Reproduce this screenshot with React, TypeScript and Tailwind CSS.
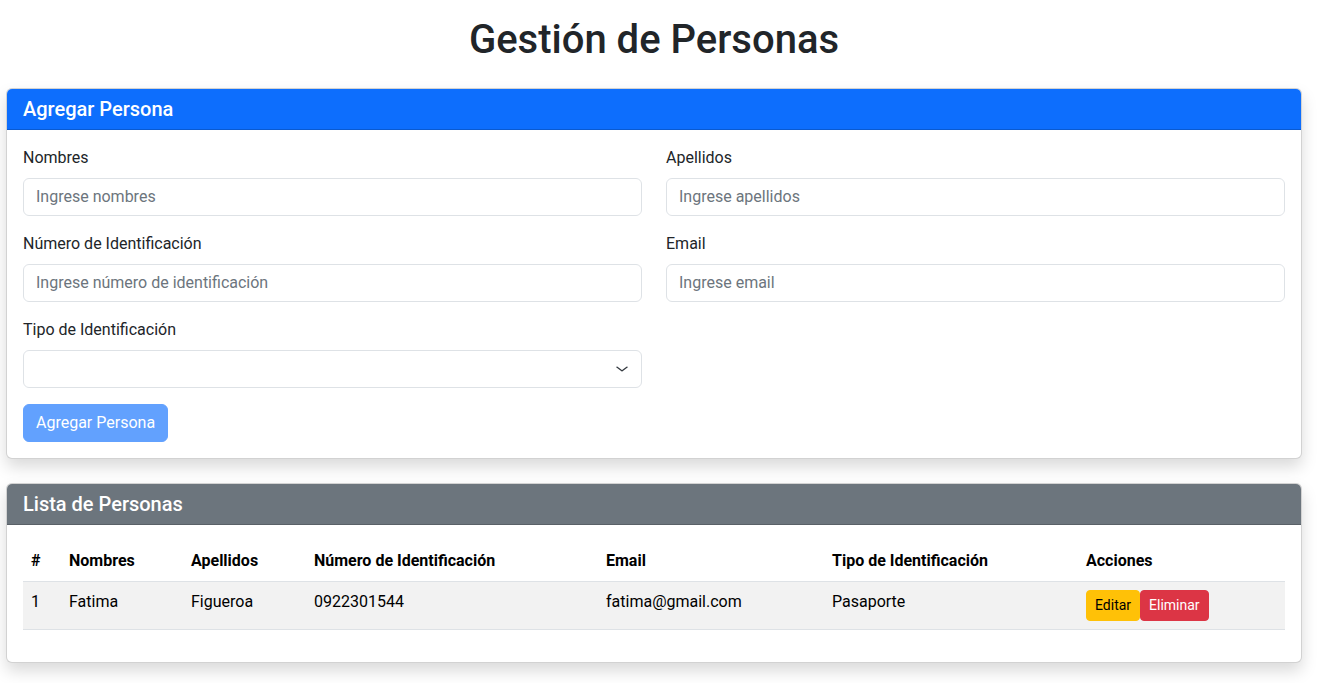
import React, { useState } from 'react';

type Persona = {
  id: number;
  nombres: string;
  apellidos: string;
  numeroIdentificacion: string;
  email: string;
  tipoIdentificacion: string;
};

const personas: Persona[] = [
  {
    id: 1,
    nombres: 'Fatima',
    apellidos: 'Figueroa',
    numeroIdentificacion: '0922301544',
    email: 'fatima@gmail.com',
    tipoIdentificacion: 'Pasaporte',
  },
];

const Field: React.FC<{ label: string; placeholder: string }> = ({ label, placeholder }) => (
  <div>
    <label className="block mb-2 text-base leading-6 text-[#212529]">{label}</label>
    <input
      type="text"
      placeholder={placeholder}
      className="block w-full h-[38px] px-3 pb-px text-base leading-6 text-[#212529] bg-white border border-[#dee2e6] rounded-[6px] outline-none placeholder:text-[#6c757d]"
    />
  </div>
);

export default function App() {
  const [tipo, setTipo] = useState('');

  return (
    <div className="bg-white pt-4 pb-5 font-[Roboto,'Liberation_Sans',sans-serif] text-[#212529]">
      <div className="w-[1296px] ml-[6px]">
        <h1 className="text-center text-[40px] leading-[48px] font-medium mb-6">Gestión de Personas</h1>

        {/* Formulario */}
        <div className="bg-white border border-black/[0.175] rounded-[6px] shadow-[0_8px_16px_rgba(0,0,0,0.15)] mb-6 overflow-hidden">
          <div className="bg-[#0d6efd] text-white px-4 py-2 border-b border-black/[0.175]">
            <h5 className="text-[20px] leading-6 font-medium">Agregar Persona</h5>
          </div>
          <div className="p-4">
            <div className="grid grid-cols-2 gap-x-6 gap-y-4">
              <Field label="Nombres" placeholder="Ingrese nombres" />
              <Field label="Apellidos" placeholder="Ingrese apellidos" />
              <Field label="Número de Identificación" placeholder="Ingrese número de identificación" />
              <Field label="Email" placeholder="Ingrese email" />
              <div>
                <label className="block mb-2 text-base leading-6">Tipo de Identificación</label>
                <div className="relative">
                  <select
                    value={tipo}
                    onChange={(e) => setTipo(e.target.value)}
                    className="block w-full h-[38px] pl-3 pr-9 text-base bg-white border border-[#dee2e6] rounded-[6px] appearance-none outline-none"
                  >
                    <option value=""></option>
                    <option value="cedula">Cédula</option>
                    <option value="pasaporte">Pasaporte</option>
                  </select>
                  <svg
                    className="absolute right-3 top-1/2 -translate-y-1/2 pointer-events-none"
                    width="16"
                    height="12"
                    viewBox="0 0 16 16"
                    preserveAspectRatio="none"
                  >
                    <path d="m3 5.5 5 5 5-5" fill="none" stroke="#343a40" strokeWidth="1.6" strokeLinecap="round" strokeLinejoin="round" />
                  </svg>
                </div>
              </div>
            </div>
            <button
              disabled
              className="mt-4 h-[38px] px-3 text-base text-white bg-[#62a1fe] border border-[#62a1fe] rounded-[6px]"
            >
              Agregar Persona
            </button>
          </div>
        </div>

        {/* Lista */}
        <div className="bg-white border border-black/[0.175] rounded-[6px] shadow-[0_8px_16px_rgba(0,0,0,0.15)] overflow-hidden">
          <div className="bg-[#6c757d] text-white px-4 py-2 border-b border-black/[0.175]">
            <h5 className="text-[20px] leading-6 font-medium">Lista de Personas</h5>
          </div>
          <div className="p-4">
            <table className="w-full mb-4 table-fixed text-black text-base leading-6">
              <thead>
                <tr className="text-left">
                  <th className="w-[38px] p-2 font-bold border-b border-[#dee2e6]">#</th>
                  <th className="w-[122px] p-2 font-bold border-b border-[#dee2e6]">Nombres</th>
                  <th className="w-[123px] p-2 font-bold border-b border-[#dee2e6]">Apellidos</th>
                  <th className="w-[292px] p-2 font-bold border-b border-[#dee2e6]">Número de Identificación</th>
                  <th className="w-[226px] p-2 font-bold border-b border-[#dee2e6]">Email</th>
                  <th className="w-[254px] p-2 font-bold border-b border-[#dee2e6]">Tipo de Identificación</th>
                  <th className="p-2 font-bold border-b border-[#dee2e6]">Acciones</th>
                </tr>
              </thead>
              <tbody>
                {personas.map((p, i) => (
                  <tr key={p.id} className={i % 2 === 0 ? 'bg-[#f2f2f2]' : ''}>
                    <td className="p-2 align-top border-b border-[#dee2e6]">{p.id}</td>
                    <td className="p-2 align-top border-b border-[#dee2e6]">{p.nombres}</td>
                    <td className="p-2 align-top border-b border-[#dee2e6]">{p.apellidos}</td>
                    <td className="p-2 align-top border-b border-[#dee2e6]">{p.numeroIdentificacion}</td>
                    <td className="p-2 align-top border-b border-[#dee2e6]">{p.email}</td>
                    <td className="p-2 align-top border-b border-[#dee2e6]">{p.tipoIdentificacion}</td>
                    <td className="p-2 align-top border-b border-[#dee2e6]">
                      <div className="flex">
                        <button className="px-2 py-1 text-sm leading-[21px] text-black bg-[#ffc107] border border-[#ffc107] rounded-[4px]">
                          Editar
                        </button>
                        <button className="px-2 py-1 text-sm leading-[21px] text-white bg-[#dc3545] border border-[#dc3545] rounded-[4px]">
                          Eliminar
                        </button>
                      </div>
                    </td>
                  </tr>
                ))}
              </tbody>
            </table>
          </div>
        </div>
      </div>
    </div>
  );
}
